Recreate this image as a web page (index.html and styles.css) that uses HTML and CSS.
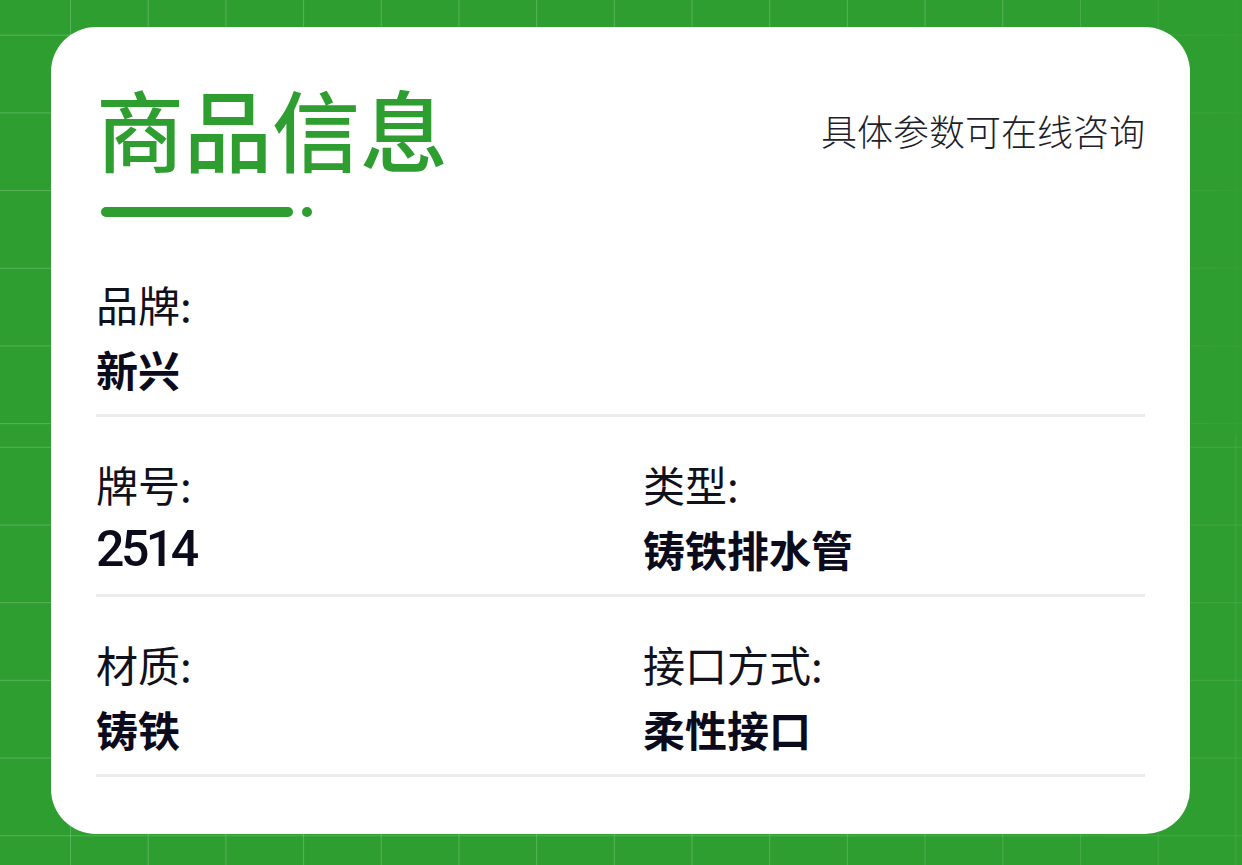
FILE: index.html
```html
<!DOCTYPE html>
<html lang="zh-CN">
<head>
<meta charset="utf-8">
<title>商品信息</title>
<link rel="stylesheet" href="styles.css">
</head>
<body>
  <main class="card">
    <header class="card-head">
      <div class="title-block">
        <h1 class="title">商品信息</h1>
        <div class="title-mark">
          <span class="mark-bar"></span>
          <span class="mark-dot"></span>
        </div>
      </div>
      <p class="subtitle">具体参数可在线咨询</p>
    </header>

    <section class="spec-list">
      <div class="spec-row">
        <div class="spec">
          <div class="spec-label">品牌:</div>
          <div class="spec-value">新兴</div>
        </div>
      </div>
      <div class="spec-row">
        <div class="spec">
          <div class="spec-label">牌号:</div>
          <div class="spec-value spec-value--num">2514</div>
        </div>
        <div class="spec">
          <div class="spec-label">类型:</div>
          <div class="spec-value">铸铁排水管</div>
        </div>
      </div>
      <div class="spec-row">
        <div class="spec">
          <div class="spec-label">材质:</div>
          <div class="spec-value">铸铁</div>
        </div>
        <div class="spec">
          <div class="spec-label">接口方式:</div>
          <div class="spec-value">柔性接口</div>
        </div>
      </div>
    </section>
  </main>
</body>
</html>
```

FILE: styles.css
```css
* {
  box-sizing: border-box;
}

html,
body {
  height: 100%;
}

body {
  margin: 0;
  padding: 27px 52px 31px 51px;
  background-color: #2f9e31;
  font-family: "Noto Sans CJK SC", "Noto Sans", sans-serif;
  color: #11111f;
  position: relative;
  overflow: hidden;
  display: flex;
}

/* decorative grid behind the card */
body::before,
body::after {
  content: "";
  position: absolute;
  left: 0;
  right: 0;
  background-image:
    linear-gradient(to right, rgba(255, 255, 255, 0.2) 1px, transparent 1px),
    linear-gradient(to bottom, rgba(255, 255, 255, 0.2) 1px, transparent 1px);
  background-size: 77.7px 77.7px;
  pointer-events: none;
}

body::before {
  top: 0;
  height: 436px;
  background-position: 70px 34.7px;
  -webkit-mask-image: linear-gradient(to right, #000 0%, #000 80%, rgba(0, 0, 0, 0.1) 100%);
  mask-image: linear-gradient(to right, #000 0%, #000 80%, rgba(0, 0, 0, 0.1) 100%);
}

body::after {
  top: 436px;
  bottom: 0;
  background-position: 70px 10.8px;
  -webkit-mask-image: linear-gradient(to right, #000 0%, #000 60%, rgba(0, 0, 0, 0.45) 100%);
  mask-image: linear-gradient(to right, #000 0%, #000 60%, rgba(0, 0, 0, 0.45) 100%);
}

.card {
  position: relative;
  z-index: 1;
  flex: 1;
  background: #ffffff;
  border-radius: 45px;
  padding: 50px 45px 57px 45px;
  display: flex;
  flex-direction: column;
}

.card-head {
  display: flex;
  justify-content: space-between;
  align-items: flex-start;
}

.title {
  margin: 0;
  font-size: 88px;
  line-height: 100px;
  font-weight: 500;
  color: #2f9e31;
  letter-spacing: 0;
}

.title-mark {
  margin-top: 30px;
  margin-left: 5px;
  display: flex;
  align-items: center;
  gap: 9px;
}

.mark-bar {
  width: 192px;
  height: 10px;
  border-radius: 5px;
  background: #2f9e31;
}

.mark-dot {
  width: 10px;
  height: 10px;
  border-radius: 50%;
  background: #2f9e31;
}

.subtitle {
  margin: 29px 0 0;
  font-size: 36px;
  line-height: 48px;
  font-weight: 300;
  color: #1e1e2c;
}

.spec-list {
  margin-top: 20px;
  display: flex;
  flex-direction: column;
}

.spec-row {
  display: grid;
  grid-template-columns: 1fr 1fr;
  column-gap: 45px;
  padding: 43px 0 21px;
  border-bottom: 3px solid #ececec;
}

.spec {
  display: flex;
  flex-direction: column;
  gap: 17px;
}

.spec-label {
  font-size: 42px;
  line-height: 48px;
  font-weight: 400;
  color: #11111c;
}

.spec-value {
  font-size: 42px;
  line-height: 48px;
  font-weight: 700;
  color: #0b0b1c;
}

.spec-value--num {
  font-family: Roboto, "Liberation Sans", "Noto Sans CJK SC", sans-serif;
  font-size: 50px;
  font-weight: 500;
  letter-spacing: -3.5px;
}
```
